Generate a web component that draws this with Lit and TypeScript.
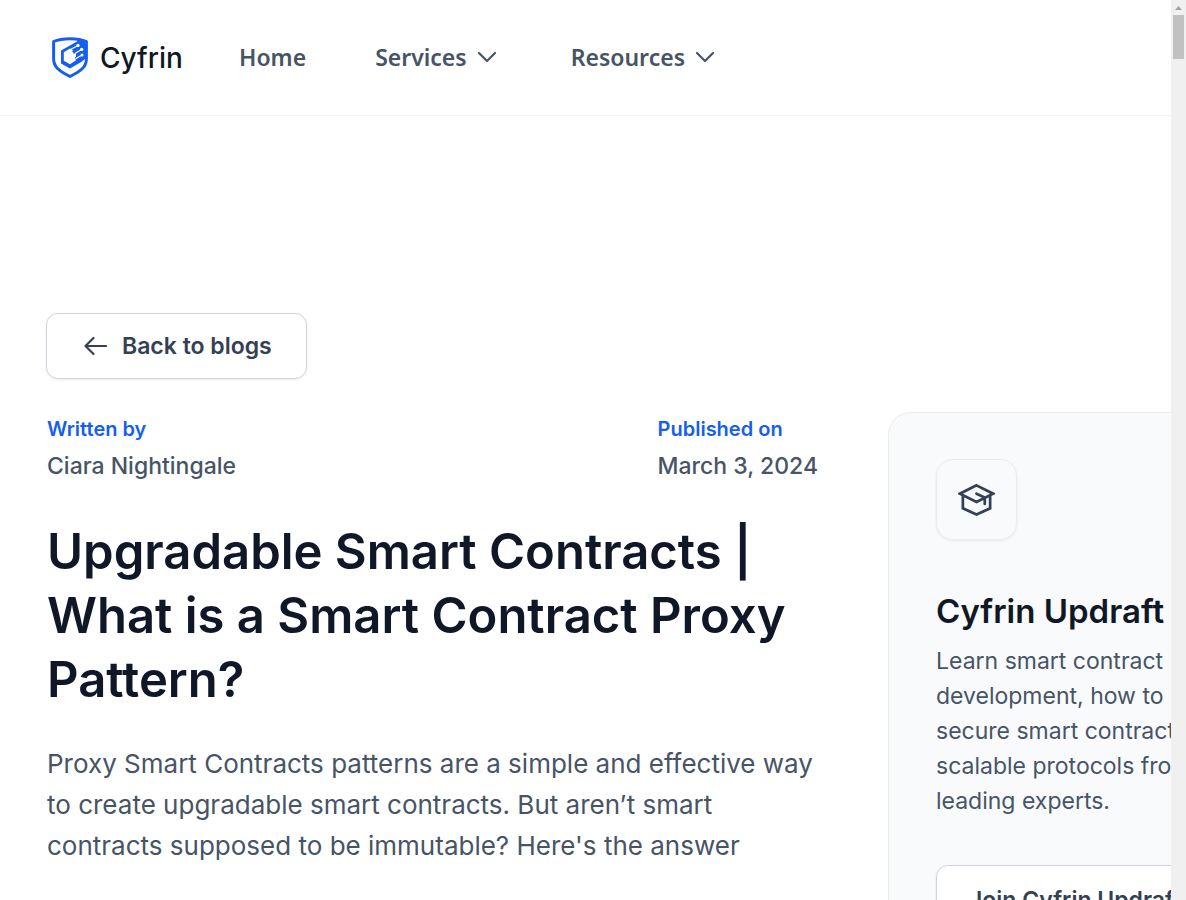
import { LitElement, html, css, svg } from "lit";
import { customElement } from "lit/decorators.js";

const chevron = html`<svg class="chevron" viewBox="0 0 20 20" aria-hidden="true">
  ${svg`<path d="M2 6l8 8 8-8" />`}
</svg>`;

@customElement("app-root")
export class AppRoot extends LitElement {
  static styles = css`
    :host {
      display: flex;
      height: 100vh;
      overflow: hidden;
      background: #fff;
      color: #475467;
      font-family: Inter, "Liberation Sans", sans-serif;
    }
    * {
      box-sizing: border-box;
    }
    h1,
    h2,
    p,
    dl,
    dt,
    dd {
      margin: 0;
    }
    svg {
      display: block;
      fill: none;
      stroke: currentColor;
      stroke-width: 2;
      stroke-linecap: round;
      stroke-linejoin: round;
    }
    .page {
      flex: 1;
      min-width: 0;
      overflow: hidden;
    }
    .header {
      display: flex;
      align-items: center;
      height: 116px;
      padding-left: 52px;
      border-bottom: 1px solid #f2f4f7;
    }
    .brand {
      display: flex;
      align-items: center;
      gap: 12px;
      width: 187px;
      color: #101828;
      font-size: 28px;
      font-weight: 500;
      text-decoration: none;
    }
    .shield {
      width: 36px;
      height: 42px;
    }
    .nav {
      display: flex;
      align-items: center;
      gap: 69px;
      font-family: "Noto Sans", sans-serif;
      font-size: 23px;
      font-weight: 600;
      line-height: 32px;
    }
    .link,
    .menu {
      display: flex;
      align-items: center;
      gap: 10px;
      padding: 0 0 2px;
      border: 0;
      background: none;
      color: #475467;
      font: inherit;
      text-decoration: none;
    }
    .menu {
      padding-right: 5px;
    }
    .chevron {
      width: 20px;
      height: 20px;
      stroke-width: 2.2;
    }
    .content {
      padding: 197px 0 0 46px;
    }
    .button {
      display: inline-flex;
      align-items: center;
      gap: 15px;
      height: 66px;
      padding: 0 34px 0 37px;
      border: 1px solid #d0d5dd;
      border-radius: 12px;
      background: #fff;
      box-shadow: 0 1px 3px rgba(16, 24, 40, 0.08);
      color: #344054;
      font-size: 23px;
      font-weight: 600;
      white-space: nowrap;
      text-decoration: none;
    }
    .join {
      height: 70px;
      padding: 0 32px;
    }
    .arrow {
      width: 23px;
      height: 20px;
    }
    .columns {
      display: grid;
      grid-template-columns: minmax(0, 1fr) 283px;
      gap: 70px;
      padding-top: 33px;
    }
    .article {
      padding-left: 1px;
    }
    .meta {
      display: flex;
      justify-content: space-between;
    }
    .meta dt {
      color: #155eef;
      font-size: 20px;
      font-weight: 600;
      line-height: 34px;
    }
    .meta dd {
      padding-top: 3px;
      font-size: 23px;
      font-weight: 500;
      line-height: 34px;
    }
    .title {
      padding-top: 37px;
      color: #101828;
      font-size: 49px;
      font-weight: 600;
      line-height: 64px;
    }
    .summary {
      padding-top: 31px;
      font-size: 26px;
      line-height: 41px;
    }
    .aside {
      height: 600px;
      padding: 46px 0 0 47px;
      border: 1px solid #eaecf0;
      border-right: 0;
      border-radius: 23px 0 0 0;
      background: #f9fafc;
      overflow: hidden;
      white-space: nowrap;
    }
    .badge {
      display: grid;
      place-items: center;
      width: 81px;
      height: 81px;
      border: 1px solid #eaecf0;
      border-radius: 17px;
      box-shadow: 0 1px 3px rgba(16, 24, 40, 0.08);
      color: #344054;
    }
    .cap {
      width: 37px;
      height: 34px;
    }
    .course {
      padding-top: 47px;
      color: #101828;
      font-size: 33px;
      font-weight: 600;
      line-height: 48px;
    }
    .blurb {
      padding: 9px 0 46px;
      font-size: 23px;
      line-height: 35px;
    }
  `;

  render() {
    return html`
      <div class="page">
        <header class="header">
          <a class="brand" href="#">
            <svg class="shield" viewBox="0 0 36 42" aria-hidden="true">
              <path stroke="#155eef" stroke-width="3" d="M18 1.700C12 1.700 6 2.500 1.600 4.500v17c0 8.500 5 12 16.400 18 11.400-6 16.400-9.500 16.400-18v-17C30 2.500 24 1.700 18 1.700Z" />
              <path fill="#155eef" stroke="none" d="M26 3h9v17l-5 4.500L18 31.500 9 26.500V13.500L25 4.500Z" />
              <path fill="#fff" stroke="none" d="M11.800 15.200 18 11.500l4 2.300 2 2v7.500l-6 4-6.200-3.600Z" />
              <path fill="#155eef" stroke="none" d="m20 14 7-4.500 4 9-8 4v-2l2-1.500v-2h-3Z" />
              <path stroke="#fff" stroke-width="1.300" d="M18.500 12.500 26 8.500M23 16.500l6.500-4M24 21.500l6-3.500" />
              <path fill="#fff" stroke="none" d="M26 6.700a1.700 1.700 0 1 1 0 3.400 1.700 1.700 0 0 1 0-3.400ZM29.700 10.700a1.700 1.700 0 1 1 0 3.400 1.700 1.700 0 0 1 0-3.400ZM30 16.500a1.500 1.500 0 1 1 0 3 1.500 1.500 0 0 1 0-3Z" />
              <path fill="#fff" stroke="none" d="m18 32.500 14.500-9C31.500 29.500 28 31.500 18 36.500Z" />
            </svg>
            <span>Cyfrin</span>
          </a>
          <nav class="nav">
            <a class="link" href="#">Home</a>
            <button class="menu" type="button">Services ${chevron}</button>
            <button class="menu" type="button">Resources ${chevron}</button>
          </nav>
        </header>
        <main class="content">
          <a class="button" href="#">
            <svg class="arrow" viewBox="0 0 23 20" aria-hidden="true">
              <path stroke-width="2.200" d="M22 10H1.500M9.500 2l-8 8 8 8" />
            </svg>
            Back to blogs
          </a>
          <div class="columns">
            <article class="article">
              <dl class="meta">
                <div>
                  <dt>Written by</dt>
                  <dd>Ciara Nightingale</dd>
                </div>
                <div>
                  <dt>Published on</dt>
                  <dd>March 3, 2024</dd>
                </div>
              </dl>
              <h1 class="title">Upgradable Smart Contracts | What is a Smart Contract Proxy Pattern?</h1>
              <p class="summary">
                Proxy Smart Contracts patterns are a simple and effective way to create upgradable smart contracts. But
                aren’t smart contracts supposed to be immutable? Here's the answer
              </p>
            </article>
            <aside class="aside">
              <div class="badge">
                <svg class="cap" viewBox="0 0 38 34" aria-hidden="true">
                  <path stroke-width="2.800" stroke-linejoin="miter" d="M19 2 36 10.500 19 19 2 10.500ZM5 13v12.500L19 32l14-6.500V13M19 10.500l8.500 4V21" />
                </svg>
              </div>
              <h2 class="course">Cyfrin Updraft</h2>
              <p class="blurb">
                Learn smart contract<br />development, how to<br />secure smart contracts,<br />scalable protocols
                from<br />leading experts.
              </p>
              <a class="button join" href="#">Join Cyfrin Updraft</a>
            </aside>
          </div>
        </main>
      </div>
      <scroll-rail></scroll-rail>
    `;
  }
}

@customElement("scroll-rail")
export class ScrollRail extends LitElement {
  static styles = css`
    :host {
      display: flex;
      flex: 0 0 15px;
      flex-direction: column;
      align-items: center;
      background: #f0f0f0;
    }
    .up {
      width: 7px;
      height: 15px;
      fill: #a3a3a3;
    }
    .thumb {
      width: 11px;
      height: 44px;
      background: #c1c1c1;
    }
  `;

  render() {
    return html`
      <svg class="up" viewBox="0 0 7 15" aria-hidden="true"><path d="M3.500 6 7 10H0Z" /></svg>
      <div class="thumb"></div>
    `;
  }
}
